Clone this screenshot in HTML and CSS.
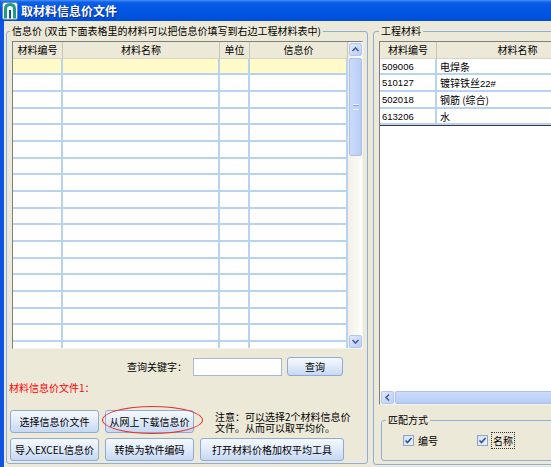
FILE: index.html
```html
<!DOCTYPE html>
<html lang="zh-CN">
<head>
    <meta charset="UTF-8">
    <title>取材料信息价文件</title>
    <link rel="stylesheet" href="styles.css">
</head>
<body>
<div class="window">
    <div class="titlebar">
        <svg class="app-icon" viewBox="0 0 16 18">
            <rect x="0.5" y="0.5" width="15" height="17" rx="2" fill="#F3F7FB" stroke="#6A8DB4"/>
            <path d="M3.5 16.5 V7 Q3.5 2.5 8 2.5 Q12.5 2.5 12.5 7 V16.5" fill="none" stroke="#1F9A84" stroke-width="3"/>
            <path d="M8 16.5 V8" stroke="#1D4C9C" stroke-width="2"/>
        </svg>
        <span class="title">取材料信息价文件</span>
    </div>

    <div class="client">
        <fieldset class="group group-price">
            <legend>信息价 (双击下面表格里的材料可以把信息价填写到右边工程材料表中)</legend>

            <div class="grid-box price-box">
                <div class="grid price-grid">
                    <div class="grid-head">
                        <span>材料编号</span><span>材料名称</span><span>单位</span><span>信息价</span>
                    </div>
                    <div class="grid-row current"><span></span><span></span><span></span><span></span></div>
                    <div class="grid-row"><span></span><span></span><span></span><span></span></div>
                    <div class="grid-row"><span></span><span></span><span></span><span></span></div>
                    <div class="grid-row"><span></span><span></span><span></span><span></span></div>
                    <div class="grid-row"><span></span><span></span><span></span><span></span></div>
                    <div class="grid-row"><span></span><span></span><span></span><span></span></div>
                    <div class="grid-row"><span></span><span></span><span></span><span></span></div>
                    <div class="grid-row"><span></span><span></span><span></span><span></span></div>
                    <div class="grid-row"><span></span><span></span><span></span><span></span></div>
                    <div class="grid-row"><span></span><span></span><span></span><span></span></div>
                    <div class="grid-row"><span></span><span></span><span></span><span></span></div>
                    <div class="grid-row"><span></span><span></span><span></span><span></span></div>
                    <div class="grid-row"><span></span><span></span><span></span><span></span></div>
                    <div class="grid-row"><span></span><span></span><span></span><span></span></div>
                    <div class="grid-row"><span></span><span></span><span></span><span></span></div>
                    <div class="grid-row"><span></span><span></span><span></span><span></span></div>
                    <div class="grid-row"><span></span><span></span><span></span><span></span></div>
                    <div class="grid-row"><span></span><span></span><span></span><span></span></div>
                </div>
                <div class="vscroll">
                    <div class="sb-btn">
                        <svg viewBox="0 0 11 11"><path d="M2.5 7 L5.5 4 L8.5 7" fill="none" stroke="#4A5F8C" stroke-width="1.6"/></svg>
                    </div>
                    <div class="sb-thumb"><i></i></div>
                    <div class="sb-track"></div>
                    <div class="sb-btn">
                        <svg viewBox="0 0 11 11"><path d="M2.5 4 L5.5 7 L8.5 4" fill="none" stroke="#4A5F8C" stroke-width="1.6"/></svg>
                    </div>
                </div>
            </div>

            <div class="query-row">
                <label for="keyword">查询关键字：</label>
                <input type="text" id="keyword" class="query-input">
                <button class="btn btn-query">查询</button>
            </div>

            <div class="file-label">材料信息价文件1：</div>

            <div class="btn-row">
                <button class="btn">选择信息价文件</button>
                <span class="marked">
                    <button class="btn">从网上下载信息价</button>
                    <span class="ellipse"></span>
                </span>
                <p class="note">注意：可以选择2个材料信息价<br>文件。从而可以取平均价。</p>
            </div>
            <div class="btn-row">
                <button class="btn">导入EXCEL信息价</button>
                <button class="btn">转换为软件编码</button>
                <button class="btn btn-wide">打开材料价格加权平均工具</button>
            </div>
        </fieldset>

        <fieldset class="group group-project">
            <legend>工程材料</legend>

            <div class="grid-box project-box">
                <div class="grid project-grid">
                    <div class="grid-head">
                        <span>材料编号</span><span>材料名称</span><span></span>
                    </div>
                    <div class="project-rows">
                        <div class="grid-row"><span class="code">509006</span><span>电焊条</span><span></span></div>
                        <div class="grid-row"><span class="code">510127</span><span>镀锌铁丝<em class="code">22#</em></span><span></span></div>
                        <div class="grid-row"><span class="code">502018</span><span>钢筋 (综合)</span><span></span></div>
                        <div class="grid-row"><span class="code">613206</span><span>水</span><span></span></div>
                    </div>
                </div>
                <div class="hscroll">
                    <div class="sb-btn">
                        <svg viewBox="0 0 11 11"><path d="M7 2.5 L4 5.5 L7 8.5" fill="none" stroke="#4A5F8C" stroke-width="1.6"/></svg>
                    </div>
                    <div class="sb-hthumb"></div>
                </div>
            </div>

            <fieldset class="group group-match">
                <legend>匹配方式</legend>
                <div class="checks">
                    <span class="check"><span class="box"><svg viewBox="0 0 9 9"><path d="M1.5 4.5 L3.5 6.5 L7.5 2" fill="none" stroke="#2850A8" stroke-width="1.6"/></svg></span>编号</span>
                    <span class="check"><span class="box"><svg viewBox="0 0 9 9"><path d="M1.5 4.5 L3.5 6.5 L7.5 2" fill="none" stroke="#2850A8" stroke-width="1.6"/></svg></span><span class="focus">名称</span></span>
                    <span class="check"><span class="box"></span></span>
                </div>
            </fieldset>
        </fieldset>
    </div>
</div>
</body>
</html>
```

FILE: styles.css
```css
* {
    box-sizing: border-box;
}

body {
    margin: 0;
    width: 551px;
    height: 467px;
    overflow: hidden;
    background: #ECE9D8;
    font-family: "Noto Sans CJK SC", sans-serif;
    font-size: 10px;
    color: #000;
}

.window {
    width: 551px;
    height: 467px;
    display: flex;
    flex-direction: column;
}

/* 标题栏 */
.titlebar {
    height: 21px;
    flex: none;
    display: flex;
    align-items: center;
    padding-left: 2px;
    background: linear-gradient(#4A93F6 0, #1262E8 2px, #0459E6 5px, #0055E3 60%, #004ED8 100%);
}

.app-icon {
    width: 16px;
    height: 18px;
}

.title {
    margin-left: 3px;
    color: #fff;
    font-size: 12px;
    font-weight: bold;
    text-shadow: 1px 1px 0 #0B2D8C;
}

.client {
    flex: 1;
    display: flex;
    align-items: flex-start;
    gap: 5px;
    padding-left: 2px;
    border-left: 4px solid #0F55E2;
    overflow: hidden;
}

/* 分组框 */
.group {
    margin: 3px 0 0;
    padding: 3px 3px 2px;
    border: 1px solid #8DAEDB;
    border-radius: 3px;
    min-width: 0;
}

.group legend {
    padding: 0 2px;
    font-size: 10px;
    line-height: 14px;
}

.group-price {
    width: 362px;
    flex: none;
}

.group-project {
    width: 250px;
    flex: none;
    padding: 3px 0 3px 5px;
}

/* 表格 */
.grid-box {
    display: flex;
    background: #fff;
    border: 1px solid;
    border-color: #7F7F7F #F4F3EE #F4F3EE #7F7F7F;
}

.price-box {
    margin-left: 2px;
    width: 351px;
    height: 308px;
}

.grid {
    flex: 1;
    overflow: hidden;
}

.grid-head,
.grid-row {
    display: grid;
    height: 16.67px;
}

.price-grid .grid-head,
.price-grid .grid-row {
    grid-template-columns: 50px 157px 30px 98px;
}

.project-grid .grid-head,
.project-grid .grid-row {
    grid-template-columns: 57px 162px 60px;
}

.grid-head span {
    background: #ECE9D8;
    border-right: 1px solid #CAC6B6;
    border-bottom: 1px solid #D8D4C4;
    text-align: center;
    line-height: 15px;
}

.grid-row {
    border-bottom: 2px solid #B6D3F2;
}

.grid-row span {
    border-right: 2px solid #B6D3F2;
    line-height: 15px;
    padding-left: 2px;
    white-space: nowrap;
}

.grid-row.current {
    background: #FFFAC8;
}

.code {
    font-family: "Liberation Sans", sans-serif;
    font-size: 9.5px;
    font-style: normal;
}

.project-rows .grid-row span + span {
    padding-left: 3px;
}

.project-box {
    height: 364px;
    flex-direction: column;
}

.project-rows {
    border-bottom: 1px solid #3C3C3C;
}

/* 滚动条 */
.vscroll {
    width: 14px;
    flex: none;
    display: flex;
    flex-direction: column;
    padding: 1px 0 0 1px;
    background: linear-gradient(90deg, #F2F0E6, #FDFDFA);
}

.sb-btn {
    width: 13px;
    height: 13px;
    flex: none;
    display: flex;
    align-items: center;
    justify-content: center;
    border: 1px solid #B3C7EE;
    border-radius: 2px;
    background: linear-gradient(135deg, #E1EAFD, #B9CDF7);
}

.sb-btn svg {
    width: 11px;
    height: 11px;
}

.sb-thumb {
    height: 98px;
    margin-top: 2px;
    flex: none;
    display: flex;
    align-items: center;
    justify-content: center;
    border: 1px solid #A9C0EC;
    border-radius: 2px;
    background: linear-gradient(90deg, #CCDBFB, #B8CDF6);
}

.sb-thumb i {
    width: 6px;
    height: 6px;
    border-top: 1px solid #EEF3FE;
    border-bottom: 1px solid #EEF3FE;
    box-shadow: inset 0 2px 0 -1px #8FA9DC;
}

.sb-track {
    flex: 1;
}

.hscroll {
    height: 13px;
    flex: none;
    display: flex;
    padding-left: 1px;
    background: #F4F2EA;
}

.sb-hthumb {
    flex: 1;
    margin-left: 1px;
    border: 1px solid #A9C0EC;
    border-radius: 2px;
    background: linear-gradient(#CCDBFB, #B8CDF6);
}

/* 查询 */
.query-row {
    display: flex;
    align-items: center;
    height: 21px;
    margin-top: 7px;
    padding-left: 117px;
}

.query-row label {
    width: 66px;
}

.query-input {
    width: 89px;
    height: 18px;
    margin: 1px 5px 0 0;
    border: 1px solid #A5B9D9;
    background: #fff;
    outline: none;
}

.btn {
    height: 23px;
    width: 89px;
    padding: 0;
    font-family: "Noto Sans CJK SC", sans-serif;
    font-size: 10px;
    color: #000;
    border: 1px solid #8DABD6;
    border-radius: 3px;
    background: linear-gradient(#F5F9FE 0, #E2ECFA 45%, #C6D8F2 100%);
}

.btn-query {
    width: 56px;
    height: 19px;
    margin-top: -1px;
}

.btn-wide {
    width: 144px;
}

.file-label {
    margin: 5px 0 0 -1px;
    line-height: 12px;
    color: #FF0000;
}

.btn-row {
    display: flex;
    align-items: center;
    gap: 6px;
    margin-top: 5px;
}

.file-label + .btn-row {
    margin-top: 16px;
}

.marked {
    position: relative;
    display: flex;
}

.ellipse {
    position: absolute;
    left: -3px;
    top: -4px;
    width: 101px;
    height: 28px;
    border: 1px solid #E8302A;
    border-radius: 50%;
}

.note {
    margin: 1px 0 0 15px;
    line-height: 11px;
    white-space: nowrap;
}

/* 匹配方式 */
.group-match {
    width: 230px;
    height: 48px;
    margin: 8px 0 0 2px;
    padding: 6px 0 0 4px;
}

.checks {
    display: flex;
    height: 14px;
    align-items: center;
    padding-left: 17px;
    gap: 39px;
}

.check {
    display: flex;
    align-items: center;
    gap: 4px;
    white-space: nowrap;
}

.box {
    width: 11px;
    height: 11px;
    display: flex;
    align-items: center;
    justify-content: center;
    border: 1px solid #8EA4C8;
    background: linear-gradient(135deg, #D8E0EE, #EEF2F8);
}

.box svg {
    width: 9px;
    height: 9px;
}

.focus {
    outline: 1px dotted #333;
    padding: 0 1px;
}
```
